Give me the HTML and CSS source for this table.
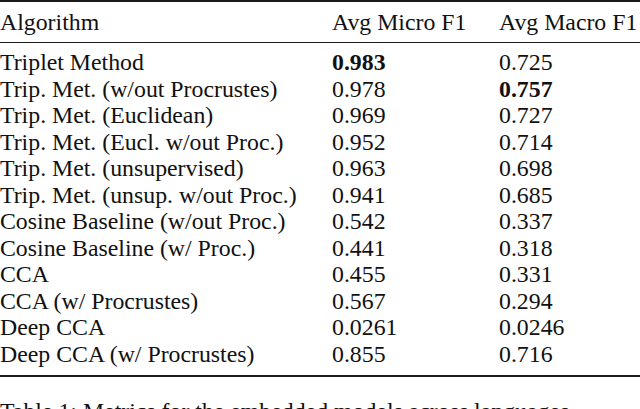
FILE: index.html
```html
<!DOCTYPE html>
<html>
<head>
<meta charset="utf-8">
<link rel="stylesheet" href="styles.css">
</head>
<body>
<div class="table">
  <div class="row head">
    <div class="c1">Algorithm</div><div class="c2">Avg Micro F1</div><div class="c3">Avg Macro F1</div>
  </div>
  <div class="body">
    <div class="row"><div class="c1">Triplet Method</div><div class="c2"><b>0.983</b></div><div class="c3">0.725</div></div>
    <div class="row"><div class="c1">Trip. Met. (w/out Procrustes)</div><div class="c2">0.978</div><div class="c3"><b>0.757</b></div></div>
    <div class="row"><div class="c1">Trip. Met. (Euclidean)</div><div class="c2">0.969</div><div class="c3">0.727</div></div>
    <div class="row"><div class="c1">Trip. Met. (Eucl. w/out Proc.)</div><div class="c2">0.952</div><div class="c3">0.714</div></div>
    <div class="row"><div class="c1">Trip. Met. (unsupervised)</div><div class="c2">0.963</div><div class="c3">0.698</div></div>
    <div class="row"><div class="c1">Trip. Met. (unsup. w/out Proc.)</div><div class="c2">0.941</div><div class="c3">0.685</div></div>
    <div class="row"><div class="c1">Cosine Baseline (w/out Proc.)</div><div class="c2">0.542</div><div class="c3">0.337</div></div>
    <div class="row"><div class="c1">Cosine Baseline (w/ Proc.)</div><div class="c2">0.441</div><div class="c3">0.318</div></div>
    <div class="row"><div class="c1">CCA</div><div class="c2">0.455</div><div class="c3">0.331</div></div>
    <div class="row"><div class="c1">CCA (w/ Procrustes)</div><div class="c2">0.567</div><div class="c3">0.294</div></div>
    <div class="row"><div class="c1">Deep CCA</div><div class="c2">0.0261</div><div class="c3">0.0246</div></div>
    <div class="row"><div class="c1">Deep CCA (w/ Procrustes)</div><div class="c2">0.855</div><div class="c3">0.716</div></div>
  </div>
</div>
<p class="caption">Table 1: Metrics for the embedded models across languages</p>
</body>
</html>
```
FILE: styles.css
```css
html, body {
  margin: 0;
  padding: 0;
  background: #ffffff;
}
body {
  font-family: "Liberation Serif", "Times New Roman", serif;
  font-size: 23.8px;
  color: #111111;
  width: 640px;
  height: 409px;
  overflow: hidden;
}
.table {
  border-top: 2.5px solid #1a1a1a;
  border-bottom: 2.5px solid #1a1a1a;
  width: 640px;
}
.row {
  display: grid;
  grid-template-columns: 332px 167px 1fr;
  height: 26.5px;
  line-height: 26.5px;
  white-space: nowrap;
}
.row.head {
  height: 40px;
  line-height: 40px;
  border-bottom: 1.5px solid #1a1a1a;
}
.body {
  padding: 6px 0 8px 0;
}
.caption {
  margin: 21px 0 0 0;
  line-height: 26px;
  white-space: nowrap;
}
b {
  font-weight: bold;
}
```
